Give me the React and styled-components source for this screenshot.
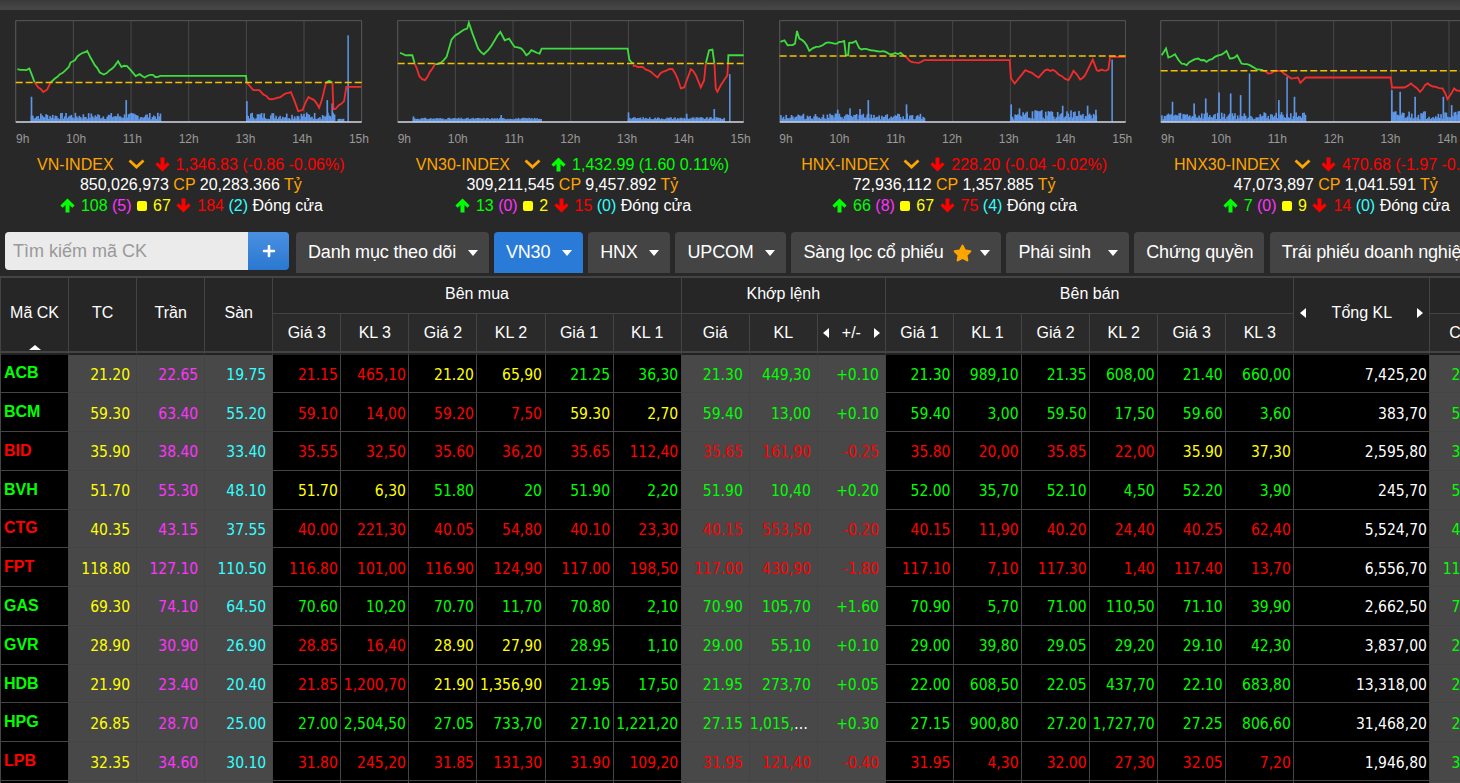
import React from 'react';
import styled, { createGlobalStyle } from 'styled-components';
import { FaPlus, FaStar } from 'react-icons/fa';

const TONES = {
  g: '#00ff00',
  r: '#ff0000',
  y: '#ffff00',
  w: '#ffffff',
  p: '#ff33ff',
  c: '#33ffff',
  o: '#ffa500',
};

const GlobalStyle = createGlobalStyle`
  html, body {
    margin: 0;
    height: 100%;
    overflow: hidden;
    background: #282828;
    font-family: "Liberation Sans", Arial, sans-serif;
  }
`;

const Page = styled.div`
  width: 1460px;
  height: 783px;
  overflow: hidden;
  background: #282828;
`;

const TopStrip = styled.div`
  height: 10px;
  background: linear-gradient(#3a3a3a, #484848);
`;

const IndexRow = styled.section`
  display: flex;
  padding-top: 10px;
  height: 222px;
  box-sizing: border-box;
`;

const IndexCard = styled.article`
  flex: 0 0 381.67px;
  width: 381.67px;
`;

const ChartBox = styled.div`
  width: 347.4px;
  height: 102.7px;
  margin-left: 15.4px;
  line-height: 0;

  svg {
    display: block;
    width: 100%;
    height: 100%;
  }
`;

const HourRow = styled.div`
  display: flex;
  justify-content: space-between;
  width: 353px;
  margin: 9px 0 0 16px;
  font-size: 12px;
  line-height: 14px;
  color: #999;
`;

const Line = styled.div`
  text-align: center;
  white-space: nowrap;
  height: 20.5px;
  line-height: 20.5px;
  font-size: 16px;
  color: #fff;
`;

const SummaryTop = styled.div`
  margin-top: 9px;
`;

const Tone = styled.span`
  color: ${(p) => TONES[p.$tone]};
`;

const Chevron = styled.svg`
  display: inline-block;
  vertical-align: 1px;
  width: 17px;
  height: 10px;
  margin: 0 9px 0 14px;
  fill: none;
  stroke: #ffa500;
  stroke-width: 2.8;
`;

const ArrowIcon = styled.svg`
  display: inline-block;
  vertical-align: -2px;
  width: 15px;
  height: 15px;
  margin: 0 6px 0 1px;
  fill: ${(p) => (p.$down ? '#ff0000' : '#00ff00')};
`;

const Square = styled.i`
  display: inline-block;
  vertical-align: 0;
  width: 10px;
  height: 10px;
  border-radius: 2px;
  background: #ffff00;
  margin: 0 6px 0 1px;
`;

const Toolbar = styled.nav`
  display: flex;
  align-items: flex-start;
  gap: 5.4px;
  height: 44px;
  padding-left: 5px;
  white-space: nowrap;
`;

const Search = styled.form`
  display: flex;
  flex: none;
  height: 38px;
  margin-right: 1.6px;
`;

const SearchInput = styled.input`
  width: 243px;
  height: 38px;
  box-sizing: border-box;
  border: 0;
  outline: 0;
  padding: 0 8px;
  border-radius: 4px 0 0 4px;
  background: #ebebeb;
  font: 18px "Liberation Sans", Arial, sans-serif;

  &::placeholder {
    color: #999;
    opacity: 1;
  }
`;

const SearchButton = styled.button`
  display: flex;
  align-items: center;
  justify-content: center;
  width: 41px;
  border: 0;
  padding: 0;
  color: #fff;
  border-radius: 0 4px 4px 0;
  background: linear-gradient(#4a90e2, #2a78d0);
`;

const Tab = styled.button`
  display: flex;
  flex: none;
  align-items: center;
  height: 41px;
  border: 0;
  padding: 0 11px 0 12px;
  border-radius: 4px 4px 0 0;
  color: #fff;
  background: ${(p) => (p.$active ? '#2a7bd8' : '#444')};
  font: 18px "Liberation Sans", Arial, sans-serif;
  letter-spacing: -0.18px;
`;

const TabCaret = styled.i`
  width: 0;
  height: 0;
  margin-left: ${(p) => p.$gap || 11.5}px;
  border-left: 5.5px solid transparent;
  border-right: 5.5px solid transparent;
  border-top: 6px solid #fff;
`;

const TabStar = styled(FaStar)`
  width: 19px;
  height: 18px;
  color: #ffa500;
  margin-left: 9px;
  margin-right: -3px;
`;

const Board = styled.table`
  table-layout: fixed;
  width: 1498.5px;
  border-collapse: separate;
  border-spacing: 0;
  border-top: 2px solid #444;
  border-left: 1px solid #444;
  background: #000;
`;

const Head = styled.th`
  position: relative;
  padding: 0 0 ${(p) => (p.$sub ? 0 : p.$tall ? 4 : 3)}px;
  height: ${(p) => (p.$sub ? '40.5px' : '36px')};
  box-sizing: border-box;
  border-right: 1px solid #444;
  border-bottom: ${(p) => (p.$bottom ? '2px solid #222' : '1px solid #444')};
  box-shadow: ${(p) => (p.$bottom ? 'inset 0 -2px 0 #444' : 'none')};
  background: ${(p) => (p.$sub ? '#2a2a2a' : '#262626')};
  color: #fff;
  font-size: 16px;
  font-weight: 400;
  white-space: nowrap;
`;

const HeadFlex = styled.div`
  display: flex;
  align-items: center;
  justify-content: space-between;
  padding: 0 ${(p) => p.$pad}px;
`;

const Caret = styled.i`
  width: 0;
  height: 0;
  border-top: 5px solid transparent;
  border-bottom: 5px solid transparent;
  ${(p) => (p.$dir === 'left' ? 'border-right: 6px solid #fff;' : 'border-left: 6px solid #fff;')}
`;

const SortMark = styled.i`
  position: absolute;
  left: 28px;
  bottom: 3px;
  width: 0;
  height: 0;
  border-left: 6px solid transparent;
  border-right: 6px solid transparent;
  border-bottom: 5px solid #fff;
`;

const Row = styled.tr`
  height: 38.78px;
`;

const Cell = styled.td`
  padding: 3px ${(p) => (p.$shade ? 6 : 2.5)}px 0 0;
  box-sizing: border-box;
  border-right: 1px solid #444;
  border-bottom: 1px solid #444;
  background: ${(p) => (p.$shade ? '#484848' : '#000')};
  color: #fff;
  font-family: "DejaVu Sans Condensed", "DejaVu Sans", Verdana, sans-serif;
  font-stretch: condensed;
  font-size: 15.5px;
  text-align: right;
  white-space: nowrap;
  overflow: hidden;
  text-overflow: ellipsis;
`;

const Code = styled.td`
  padding: 0 0 0 3px;
  box-sizing: border-box;
  border-right: 1px solid #444;
  border-bottom: 1px solid #444;
  background: #000;
  color: ${(p) => TONES[p.$tone]};
  font-size: 16px;
  font-weight: 700;
`;

function Arrow({ down }) {
  return (
    <ArrowIcon $down={down} viewBox="0 0 15 15">
      <path
        d="M7.5 0.5L14.6 7.6L12.4 9.8L9.5 6.9V14.5H5.5V6.9L2.6 9.8L0.4 7.6Z"
        transform={down ? 'rotate(180 7.5 7.5)' : undefined}
      />
    </ArrowIcon>
  );
}

// seeded so the volume bars stay the same on every render
function makeBars({ ranges, peaks, seed }) {
  let s = seed;
  const out = [];
  ranges.forEach(([from, to, lv]) => {
    for (let x = from; x < to; x += 4) {
      s = (s * 9301 + 49297) % 233280;
      const r = s / 233280;
      out.push([x, 7 + r * lv]);
    }
  });
  return out.concat(peaks);
}

// the traced lines only hold the turning points, this adds the small ticks
function roughen(points, seed) {
  let s = seed;
  const pts = points.split(' ').map((p) => p.split(',').map(Number));
  const out = [pts[0].join(',')];
  for (let i = 1; i < pts.length; i += 1) {
    const [x1, y1] = pts[i - 1];
    const [x2, y2] = pts[i];
    const steps = Math.floor(Math.abs(x2 - x1) / 7);
    if (y1 !== y2 && Math.abs(y2 - y1) < 45 && Math.abs(x2 - x1) < 120) {
      for (let k = 1; k < steps; k += 1) {
        s = (s * 9301 + 49297) % 233280;
        const n = (s / 233280 - 0.5) * 7;
        out.push(`${x1 + ((x2 - x1) * k) / steps},${y1 + ((y2 - y1) * k) / steps + n}`);
      }
    }
    out.push(pts[i].join(','));
  }
  return out.join(' ');
}

const CHARTS = [
  {
    name: 'VN-INDEX',
    up: false,
    value: '1,346.83 (-0.86 -0.06%)',
    volume: '850,026,973',
    amount: '20,283.366',
    breadth: ['108', '5', '67', '184', '2'],
    x0: 46,
    ref: 247,
    green: [
      '52,207 70,209 88,205 97,228 104,247',
      '152,247 165,235 180,222 195,212 207,200 212,187 225,180 240,163 258,155 262,152 272,172 285,195 300,217 312,223 330,210 345,197 355,183 365,200 382,198 395,212 408,228 420,222 435,232 452,224 475,230 482,227 740,227 742,247',
      '982,247 990,242 1000,247',
    ],
    red: [
      '104,247 115,262 130,276 142,268 152,247',
      '742,247 755,262 762,270 780,270 792,283 810,297 835,293 860,280 875,276 885,300 897,333 910,330 928,291 945,300 960,323 968,300 980,250 985,247',
      '1000,247 1003,328 1010,326 1035,303 1042,260 1087,260',
    ],
    bars: makeBars({
      ranges: [[92, 482, 20], [740, 1005, 22], [1015, 1035, 2]],
      seed: 7,
      peaks: [[92, 75], [377, 65], [740, 62], [982, 65], [997, 55], [1045, 260]],
    }),
  },
  {
    name: 'VN30-INDEX',
    up: true,
    value: '1,432.99 (1.60 0.11%)',
    volume: '309,211,545',
    amount: '9,457.892',
    breadth: ['13', '0', '2', '15', '0'],
    x0: 52,
    ref: 190,
    green: [
      '60,158 85,165 97,165 104,190',
      '165,192 182,188 200,170 215,118 235,100 262,85 267,67 278,100 295,145 312,162 325,150 345,120 362,95 375,120 388,115 405,140 425,145 440,165 455,150 480,160 486,145 745,145 750,178 765,190',
      '980,190 990,150 1000,148 1006,190',
      '1047,190 1048,165 1094,165',
    ],
    red: [
      '104,190 118,228 135,240 150,215 165,192',
      '760,198 790,200 815,215 835,232 850,215 880,207 895,235 905,265 915,262 935,207 950,225 965,262 975,240 980,190',
      '1006,190 1010,265 1015,275 1035,240 1045,225 1047,190',
    ],
    bars: makeBars({
      ranges: [[98, 486, 5], [745, 1035, 7]],
      seed: 31,
      peaks: [[98, 16], [362, 20], [745, 28], [920, 24], [1003, 38], [1050, 143]],
    }),
  },
  {
    name: 'HNX-INDEX',
    up: false,
    value: '228.20 (-0.04 -0.02%)',
    volume: '72,936,112',
    amount: '1,357.885',
    breadth: ['66', '8', '67', '75', '4'],
    x0: 25,
    ref: 167,
    green: [
      '28,125 40,120 50,135 72,130 78,92 85,115 100,125 115,152 135,140 155,135 165,128 190,130 220,122 225,165 232,165 235,128 255,122 265,143 300,150 320,153 345,155 365,162 390,158 400,167',
    ],
    red: [
      '400,167 415,180 445,188 460,180 718,180 722,235 733,250 745,235 765,210 785,218 805,232 825,210 855,213 875,228 895,240 910,212 930,238 945,225 968,178 980,210 1015,208 1020,170 1067,170',
    ],
    bars: makeBars({
      ranges: [[27, 460, 18], [720, 978, 28]],
      seed: 113,
      peaks: [[290, 65], [405, 52], [235, 40], [198, 36], [265, 38], [720, 52], [745, 40], [875, 48], [950, 48], [975, 36], [1024, 187]],
    }),
  },
  {
    name: 'HNX30-INDEX',
    up: false,
    value: '470.68 (-1.97 -0.42%)',
    volume: '47,073,897',
    amount: '1,041.591',
    breadth: ['7', '0', '9', '14', '0'],
    x0: 31,
    ref: 212,
    green: [
      '35,165 48,145 55,172 75,162 95,190 110,195 125,182 145,175 170,185 195,170 215,163 230,152 240,175 262,165 275,190 300,195 320,207 340,210',
    ],
    red: [
      '340,212 355,220 375,212 395,212 425,235 445,232 452,248 468,232 724,232 728,262 745,262 765,262 785,250 812,275 835,250 860,260 880,265 895,297 915,265 945,280 980,270 1073,262',
    ],
    bars: makeBars({
      ranges: [[33, 466, 22], [725, 1073, 26]],
      seed: 59,
      peaks: [[297, 145], [410, 135], [65, 60], [205, 88], [240, 85], [270, 80], [165, 70], [385, 65], [432, 75], [130, 55], [725, 95], [750, 90], [795, 75], [880, 75], [905, 50]],
    }),
  },
];

const HOURS = ['9h', '10h', '11h', '12h', '13h', '14h', '15h'];

function IndexChart({ chart }) {
  const { x0, ref, green, red, bars } = chart;
  const left = x0 + 1;
  const right = x0 + 1042;
  return (
    <svg viewBox={`${x0} 59 1043 309`}>
      {[1, 2, 3, 4, 5].map((i) => (
        <line key={i} x1={left + i * 173.5} x2={left + i * 173.5} y1="61" y2="365" stroke="#484848" strokeWidth="3" />
      ))}
      <path d={`M${left} 365V61H${right}V365`} fill="none" stroke="#5a5a5a" strokeWidth="3" />
      {bars.map(([x, h], i) => (
        <rect key={i} x={x} y={365 - h} width={h > 100 ? 4.5 : 5} height={h} fill="#5e97e8" />
      ))}
      <line x1={left} x2={right} y1="366" y2="366" stroke="#d5dae8" strokeWidth="4" />
      {green.map((pts, i) => (
        <polyline key={pts} points={roughen(pts, 11 + i)} fill="none" stroke="#3fdc3f" strokeWidth="5.5" />
      ))}
      {red.map((pts, i) => (
        <polyline key={pts} points={roughen(pts, 23 + i)} fill="none" stroke="#f22c2c" strokeWidth="5.5" />
      ))}
      <line x1={left} x2={right} y1={ref} y2={ref} stroke="#f2c200" strokeWidth="4.5" strokeDasharray="21 9" />
    </svg>
  );
}

function IndexPanel({ chart }) {
  const [adv, ceil, same, dec, floor] = chart.breadth;
  return (
    <IndexCard>
      <ChartBox>
        <IndexChart chart={chart} />
      </ChartBox>
      <HourRow>
        {HOURS.map((h) => (
          <span key={h}>{h}</span>
        ))}
      </HourRow>
      <SummaryTop>
        <Line>
          <Tone $tone="o">{chart.name}</Tone>
          <Chevron viewBox="0 0 17 10">
            <polyline points="1.5,1.5 8.5,8 15.5,1.5" />
          </Chevron>
          <Arrow down={!chart.up} />
          <Tone $tone={chart.up ? 'g' : 'r'}>{chart.value}</Tone>
        </Line>
        <Line>
          {chart.volume} <Tone $tone="o">CP</Tone> {chart.amount} <Tone $tone="o">Tỷ</Tone>
        </Line>
        <Line>
          <Arrow />
          <Tone $tone="g">{adv} </Tone>
          <Tone $tone="p">({ceil}) </Tone>
          <Square />
          <Tone $tone="y">{same} </Tone>
          <Arrow down />
          <Tone $tone="r">{dec} </Tone>
          <Tone $tone="c">({floor}) </Tone>
          Đóng cửa
        </Line>
      </SummaryTop>
    </IndexCard>
  );
}

const ROWS = [
  ['ACB', 'g', '21.20', '22.65', '19.75', 'r 21.15 465,10', 'y 21.20 65,90', 'g 21.25 36,30', 'g 21.30 449,30 +0.10', 'g 21.30 989,10', 'g 21.35 608,00', 'g 21.40 660,00', '7,425,20', '21.40'],
  ['BCM', 'g', '59.30', '63.40', '55.20', 'r 59.10 14,00', 'r 59.20 7,50', 'y 59.30 2,70', 'g 59.40 13,00 +0.10', 'g 59.40 3,00', 'g 59.50 17,50', 'g 59.60 3,60', '383,70', '59.60'],
  ['BID', 'r', '35.90', '38.40', '33.40', 'r 35.55 32,50', 'r 35.60 36,20', 'r 35.65 112,40', 'r 35.65 161,90 -0.25', 'r 35.80 20,00', 'r 35.85 22,00', 'y 35.90 37,30', '2,595,80', '36.00'],
  ['BVH', 'g', '51.70', '55.30', '48.10', 'y 51.70 6,30', 'g 51.80 20', 'g 51.90 2,20', 'g 51.90 10,40 +0.20', 'g 52.00 35,70', 'g 52.10 4,50', 'g 52.20 3,90', '245,70', '52.20'],
  ['CTG', 'r', '40.35', '43.15', '37.55', 'r 40.00 221,30', 'r 40.05 54,80', 'r 40.10 23,30', 'r 40.15 553,50 -0.20', 'r 40.15 11,90', 'r 40.20 24,40', 'r 40.25 62,40', '5,524,70', '40.70'],
  ['FPT', 'r', '118.80', '127.10', '110.50', 'r 116.80 101,00', 'r 116.90 124,90', 'r 117.00 198,50', 'r 117.00 430,90 -1.80', 'r 117.10 7,10', 'r 117.30 1,40', 'r 117.40 13,70', '6,556,70', '119.00'],
  ['GAS', 'g', '69.30', '74.10', '64.50', 'g 70.60 10,20', 'g 70.70 11,70', 'g 70.80 2,10', 'g 70.90 105,70 +1.60', 'g 70.90 5,70', 'g 71.00 110,50', 'g 71.10 39,90', '2,662,50', '71.00'],
  ['GVR', 'g', '28.90', '30.90', '26.90', 'r 28.85 16,40', 'y 28.90 27,90', 'g 28.95 1,10', 'g 29.00 55,10 +0.10', 'g 29.00 39,80', 'g 29.05 29,20', 'g 29.10 42,30', '3,837,00', '29.10'],
  ['HDB', 'g', '21.90', '23.40', '20.40', 'r 21.85 1,200,70', 'y 21.90 1,356,90', 'g 21.95 17,50', 'g 21.95 273,70 +0.05', 'g 22.00 608,50', 'g 22.05 437,70', 'g 22.10 683,80', '13,318,00', '22.00'],
  ['HPG', 'g', '26.85', '28.70', '25.00', 'g 27.00 2,504,50', 'g 27.05 733,70', 'g 27.10 1,221,20', 'g 27.15 1,015,90 +0.30', 'g 27.15 900,80', 'g 27.20 1,727,70', 'g 27.25 806,60', '31,468,20', '27.20'],
  ['LPB', 'r', '32.35', '34.60', '30.10', 'r 31.80 245,20', 'r 31.85 131,30', 'r 31.90 109,20', 'r 31.95 121,40 -0.40', 'r 31.95 4,30', 'r 32.00 27,30', 'r 32.05 7,20', '1,946,80', '32.40'],
];

const SUB_BUY = ['Giá 3', 'KL 3', 'Giá 2', 'KL 2', 'Giá 1', 'KL 1'];
const SUB_SELL = ['Giá 1', 'KL 1', 'Giá 2', 'KL 2', 'Giá 3', 'KL 3'];
const SHADED_COLS = [1, 2, 3, 10, 11, 12, 20];

function Pair({ spec, shade }) {
  const [tone, ...vals] = spec.split(' ');
  return vals.map((v) => (
    <Cell key={v} $shade={shade}>
      <Tone $tone={tone}>{v}</Tone>
    </Cell>
  ));
}

function BoardRow({ row }) {
  const [code, tone, tc, ceil, floor, b3, b2, b1, match, s1, s2, s3, total, high] = row;
  return (
    <Row>
      <Code $tone={tone}>{code}</Code>
      <Cell $shade><Tone $tone="y">{tc}</Tone></Cell>
      <Cell $shade><Tone $tone="p">{ceil}</Tone></Cell>
      <Cell $shade><Tone $tone="c">{floor}</Tone></Cell>
      <Pair spec={b3} />
      <Pair spec={b2} />
      <Pair spec={b1} />
      <Pair spec={match} shade />
      <Pair spec={s1} />
      <Pair spec={s2} />
      <Pair spec={s3} />
      <Cell>{total}</Cell>
      <Cell $shade><Tone $tone="g">{high}</Tone></Cell>
    </Row>
  );
}

function PriceBoard() {
  return (
    <Board>
      <colgroup>
        {Array.from({ length: 19 }, (_, i) => (
          <col key={i} width={68.05} />
        ))}
        <col width={136} />
        <col width={68} />
      </colgroup>
      <thead>
        <tr>
          <Head rowSpan={2} $bottom $tall>Mã CK<SortMark /></Head>
          <Head rowSpan={2} $bottom $tall>TC</Head>
          <Head rowSpan={2} $bottom $tall>Trần</Head>
          <Head rowSpan={2} $bottom $tall>Sàn</Head>
          <Head colSpan={6}>Bên mua</Head>
          <Head colSpan={3}>Khớp lệnh</Head>
          <Head colSpan={6}>Bên bán</Head>
          <Head rowSpan={2} $bottom $tall>
            <HeadFlex $pad={6}>
              <Caret $dir="left" />
              Tổng KL
              <Caret $dir="right" />
            </HeadFlex>
          </Head>
          <Head />
        </tr>
        <tr>
          {SUB_BUY.map((t) => (
            <Head key={t} $sub $bottom>{t}</Head>
          ))}
          <Head $sub $bottom>Giá</Head>
          <Head $sub $bottom>KL</Head>
          <Head $sub $bottom>
            <HeadFlex $pad={5}>
              <Caret $dir="left" />
              +/-
              <Caret $dir="right" />
            </HeadFlex>
          </Head>
          {SUB_SELL.map((t) => (
            <Head key={t} $sub $bottom>{t}</Head>
          ))}
          <Head $sub $bottom>Cao</Head>
        </tr>
      </thead>
      <tbody>
        {ROWS.map((r) => (
          <BoardRow key={r[0]} row={r} />
        ))}
        <Row>
          {Array.from({ length: 21 }, (_, i) => (
            <Cell key={i} $shade={SHADED_COLS.includes(i)} />
          ))}
        </Row>
      </tbody>
    </Board>
  );
}

export default function App() {
  return (
    <Page>
      <GlobalStyle />
      <TopStrip />
      <IndexRow>
        {CHARTS.map((c) => (
          <IndexPanel key={c.name} chart={c} />
        ))}
      </IndexRow>
      <Toolbar>
        <Search>
          <SearchInput placeholder="Tìm kiếm mã CK" />
          <SearchButton type="button"><FaPlus size={14} /></SearchButton>
        </Search>
        <Tab>Danh mục theo dõi<TabCaret /></Tab>
        <Tab $active>VN30<TabCaret /></Tab>
        <Tab>HNX<TabCaret /></Tab>
        <Tab>UPCOM<TabCaret /></Tab>
        <Tab>Sàng lọc cổ phiếu<TabStar /><TabCaret /></Tab>
        <Tab>Phái sinh<TabCaret $gap={17} /></Tab>
        <Tab>Chứng quyền</Tab>
        <Tab>Trái phiếu doanh nghiệp</Tab>
      </Toolbar>
      <PriceBoard />
    </Page>
  );
}
